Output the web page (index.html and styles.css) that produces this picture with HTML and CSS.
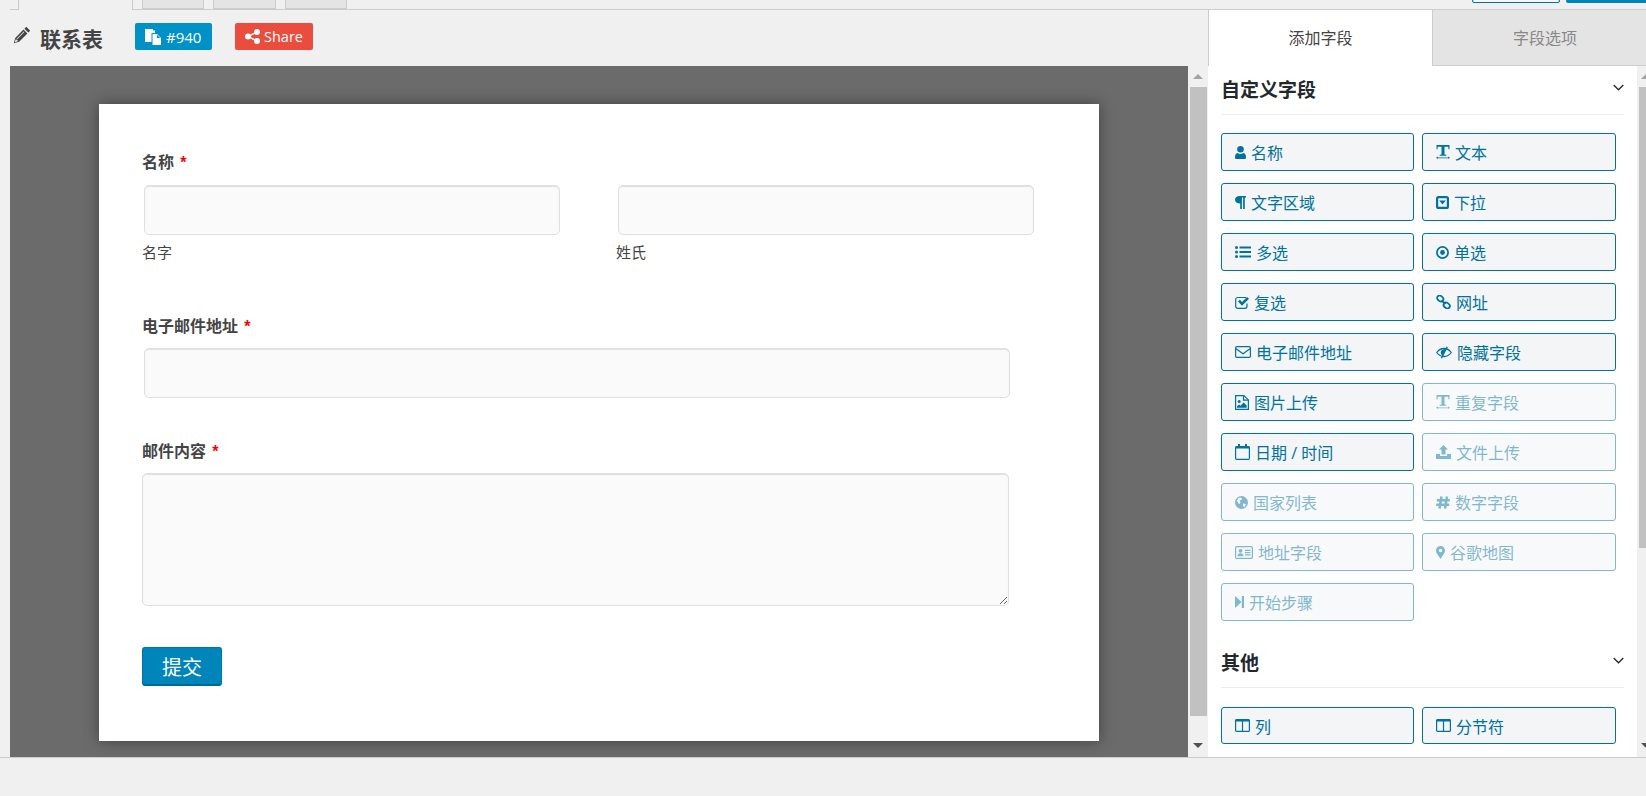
FILE: index.html
```html
<!DOCTYPE html>
<html lang="zh-CN">
<head>
  <meta charset="utf-8"/>
  <title>联系表</title>
  <link rel="stylesheet" href="styles.css">
</head>
<body>
  <div class="top-bar">
    <div class="top-tab top-tab-active"></div>
    <div class="top-tab"></div>
    <div class="top-tab"></div>
    <div class="top-tab"></div>
    <div class="top-actions">
      <div class="top-btn-outline"></div>
      <div class="top-btn-solid"></div>
    </div>
  </div>

  <div class="workspace">
    <div class="editor">
      <div class="editor-head">
        <svg class="title-icon" width="18" height="18" viewBox="0 0 18 18"><path d="M13.300.8l3.900 3.900-1.900 1.900-3.900-3.900zM10.500 3.600l3.900 3.900-8.300 8.300-5.300 1.400 1.400-5.300z M10.800 5.500L3.600 12.700l.6.6 7.200-7.200z M2.700 13.200l-.9 3 3-.9-.5-1.300z" fill-rule="evenodd"/></svg>
        <h1 class="form-title">联系表</h1>
        <span class="badge badge-id">
          <svg width="16" height="16" viewBox="0 0 16 16"><path d="M0 0h8v1.500H10V4H6.500v9H0z"/><path d="M7.500 5H12l4 4v7H7.500z M12 5.800V9h3.200z" fill-rule="evenodd"/></svg>
          #940
        </span>
        <span class="badge badge-share">
          <svg width="15" height="15" viewBox="0 0 15 15"><circle cx="12" cy="3" r="3"/><circle cx="12" cy="12" r="3"/><circle cx="3" cy="7.500" r="3"/><path d="M3 7.500L12 3M3 7.500L12 12" stroke="currentColor" stroke-width="1.500"/></svg>
          Share
        </span>
      </div>
      <div class="canvas">
        <div class="stage">
          <form class="paper">
            <label class="field-label">名称 <span class="req">*</span></label>
            <div class="name-row">
              <div class="name-col">
                <input class="text-input" type="text">
                <div class="sub-label">名字</div>
              </div>
              <div class="name-col">
                <input class="text-input" type="text">
                <div class="sub-label">姓氏</div>
              </div>
            </div>
            <label class="field-label email-label">电子邮件地址 <span class="req">*</span></label>
            <input class="text-input email-input" type="text">
            <label class="field-label message-label">邮件内容 <span class="req">*</span></label>
            <textarea class="text-area"></textarea>
            <button class="submit-btn" type="button">提交</button>
          </form>
        </div>
        <div class="scrollbar">
          <div class="arrow-up"></div>
          <div class="thumb thumb-main"></div>
          <div class="arrow-down"></div>
        </div>
      </div>
    </div>

    <div class="sidebar">
      <div class="side-tabs">
        <div class="side-tab side-tab-active">添加字段</div>
        <div class="side-tab">字段选项</div>
      </div>
      <div class="side-body">
        <div class="side-panel">
          <div class="section-head">
            <h2>自定义字段</h2>
            <svg width="11" height="7" viewBox="0 0 11 7"><path d="M.7 1l4.800 4.800L10.300 1" fill="none" stroke="currentColor" stroke-width="1.300"/></svg>
          </div>
          <div class="field-grid">
            <div class="field-btn">
              <svg width="11" height="13" viewBox="0 0 11 13"><circle cx="5.500" cy="3.300" r="3.300"/><path d="M1.500 13C.5 13 0 12.400 0 11.400 0 9.200.6 6.900 2.700 6.900c.7.600 1.700 1 2.800 1s2.100-.4 2.800-1C10.400 6.900 11 9.200 11 11.400c0 1-.5 1.600-1.500 1.600z"/></svg>
              名称
            </div>
            <div class="field-btn">
              <svg width="14" height="14" viewBox="0 0 14 14"><path d="M.5 0h13v4.200h-1l-.3-2.400H8.500v7.600l1.800.3v1H3.700v-1l1.800-.3V1.800H1.800L1.500 4.200h-1z"/><path d="M0 12.800l1.800-1.400v1h10.400v-1l1.800 1.400-1.800 1.200v-.8H1.800v.8z"/></svg>
              文本
            </div>
            <div class="field-btn">
              <svg width="11" height="13" viewBox="0 0 11 13"><path d="M4.800 0H11v1.600H9.800V13H8.100V1.600H6.900V13H5.200V7.600C2 7.600 0 6 0 3.800S2 0 4.800 0z"/></svg>
              文字区域
            </div>
            <div class="field-btn">
              <svg width="13" height="13" viewBox="0 0 13 13"><rect x="1.100" y="1.100" width="10.800" height="10.800" rx="1.500" fill="none" stroke="currentColor" stroke-width="2.200"/><path d="M3.200 4.600h6.600l-3.300 4z"/></svg>
              下拉
            </div>
            <div class="field-btn">
              <svg width="16" height="12" viewBox="0 0 16 12"><circle cx="1.500" cy="1.500" r="1.500"/><circle cx="1.500" cy="6" r="1.500"/><circle cx="1.500" cy="10.500" r="1.500"/><path d="M4.500.5H16v2H4.500zM4.500 5H16v2H4.500zM4.500 9.500H16v2H4.500z"/></svg>
              多选
            </div>
            <div class="field-btn">
              <svg width="13" height="13" viewBox="0 0 13 13"><circle cx="6.500" cy="6.500" r="5.600" fill="none" stroke="currentColor" stroke-width="1.700"/><circle cx="6.500" cy="6.500" r="2.400"/></svg>
              单选
            </div>
            <div class="field-btn">
              <svg width="14" height="13" viewBox="0 0 14 13"><path d="M12 7.500V10.300c0 1.200-.8 2-2 2H2.700c-1.200 0-2-.8-2-2V3.500c0-1.200.8-2 2-2H11" fill="none" stroke="currentColor" stroke-width="1.200"/><path d="M3 5.600l1.800-1.800 2.200 2.300 5.100-5.200L14 2.800 7 9.800z"/></svg>
              复选
            </div>
            <div class="field-btn">
              <svg width="15" height="14" viewBox="0 0 15 14"><g fill="none" stroke="currentColor" stroke-width="1.800"><rect x="1" y="1" width="6.500" height="5" rx="2.500" transform="rotate(40 4.200 3.500)"/><rect x="7.500" y="8" width="6.500" height="5" rx="2.500" transform="rotate(40 10.700 10.500)"/><path d="M5.500 5.500l4 3.500"/></g></svg>
              网址
            </div>
            <div class="field-btn">
              <svg width="16" height="12" viewBox="0 0 16 12"><rect x=".6" y=".6" width="14.800" height="10.800" rx="1.300" fill="none" stroke="currentColor" stroke-width="1.200"/><path d="M1 2.800l7 5 7-5" fill="none" stroke="currentColor" stroke-width="1.200"/></svg>
              电子邮件地址
            </div>
            <div class="field-btn">
              <svg width="16" height="13" viewBox="0 0 16 13"><path d="M.8 6.500C2.500 4 5 2.500 8 2.500s5.500 1.500 7.200 4c-1.700 2.500-4.200 4-7.200 4s-5.500-1.500-7.200-4z" fill="none" stroke="currentColor" stroke-width="1.300"/><path d="M4.800 6.500c0-1.800 1.400-3.200 3.200-3.200h1.600L6.600 9.400C5.400 8.900 4.800 7.800 4.800 6.500z"/><path d="M5.400 12.300L11.200.7" stroke="currentColor" stroke-width="1.400"/></svg>
              隐藏字段
            </div>
            <div class="field-btn">
              <svg width="14" height="15" viewBox="0 0 14 15"><path d="M.6.6h8.200l4.600 4.300v9.500H.6z" fill="none" stroke="currentColor" stroke-width="1.200"/><path d="M8.500.8v4.400h4.700" fill="none" stroke="currentColor" stroke-width="1.200"/><circle cx="4.200" cy="6.500" r="1.500"/><path d="M2 12.800v-1.600l2-1.700 1.500 1.300 3.200-3.200 3 3v2.200z"/></svg>
              图片上传
            </div>
            <div class="field-btn is-disabled">
              <svg width="14" height="14" viewBox="0 0 14 14"><path d="M.5 0h13v4.200h-1l-.3-2.400H8.500v7.600l1.800.3v1H3.700v-1l1.800-.3V1.800H1.800L1.500 4.200h-1z"/><path d="M0 12.800l1.800-1.400v1h10.400v-1l1.800 1.400-1.800 1.200v-.8H1.800v.8z"/></svg>
              重复字段
            </div>
            <div class="field-btn">
              <svg width="15" height="16" viewBox="0 0 15 16"><rect x=".6" y="2.600" width="13.800" height="12.800" rx="1.200" fill="none" stroke="currentColor" stroke-width="1.200"/><path d="M.6 2.500h13.800v2H.6zM3 0h2v4H3zM10 0h2v4h-2z"/></svg>
              日期 / 时间
            </div>
            <div class="field-btn is-disabled">
              <svg width="15" height="14" viewBox="0 0 15 14"><path d="M7.500 0l4.500 4.500H9.500V9.500h-4V4.500H3z"/><path d="M0 9h4v2h7V9h4v5H0z"/></svg>
              文件上传
            </div>
            <div class="field-btn is-disabled">
              <svg width="13" height="13" viewBox="0 0 13 13"><circle cx="6.500" cy="6.500" r="6.500"/><path d="M3 2.500l2.500-1 1.500 1-.5 1.500-2 .5 1 2.500L4 8 2 5zM8 7.500l3 .5-1.500 3L8 10z" fill="#fff"/></svg>
              国家列表
            </div>
            <div class="field-btn is-disabled">
              <svg width="14" height="13" viewBox="0 0 14 13"><path d="M5.500.5L3.500 12.500M11 .5L9 12.500M.8 4.200h13M.2 8.800h13" fill="none" stroke="currentColor" stroke-width="2.500"/></svg>
              数字字段
            </div>
            <div class="field-btn is-disabled">
              <svg width="18" height="13" viewBox="0 0 18 13"><rect x=".6" y=".6" width="16.800" height="11.800" rx="1.200" fill="none" stroke="currentColor" stroke-width="1.200"/><circle cx="5.500" cy="4.800" r="1.900"/><path d="M2.500 10.200c0-2 1-3 3-3s3 1 3 3zM10 3.800h5.500v1.200H10zM10 6h5.500v1.200H10zM10 8.200h5.500v1.200H10z"/></svg>
              地址字段
            </div>
            <div class="field-btn is-disabled">
              <svg width="9" height="13" viewBox="0 0 9 13"><path d="M4.500 0C2 0 0 2 0 4.500c0 1 .3 1.700.7 2.400L4.500 13l3.800-6.100c.4-.7.7-1.400.7-2.400C9 2 7 0 4.500 0zm0 6.300a1.800 1.800 0 1 1 0-3.600 1.800 1.800 0 0 1 0 3.600z" fill-rule="evenodd"/></svg>
              谷歌地图
            </div>
            <div class="field-btn is-disabled">
              <svg width="9" height="12" viewBox="0 0 9 12"><path d="M0 0l6.500 6L0 12zM6.800 0H9v12H6.800z"/></svg>
              开始步骤
            </div>
          </div>

          <div class="section-head section-head-next">
            <h2>其他</h2>
            <svg width="11" height="7" viewBox="0 0 11 7"><path d="M.7 1l4.800 4.800L10.300 1" fill="none" stroke="currentColor" stroke-width="1.300"/></svg>
          </div>
          <div class="field-grid field-grid-short">
            <div class="field-btn">
              <svg width="15" height="13" viewBox="0 0 15 13"><rect x=".6" y=".6" width="13.800" height="11.800" rx="1" fill="none" stroke="currentColor" stroke-width="1.200"/><path d="M.6.6h13.800v2H.6zM6.900 2h1.200v10H6.900z"/></svg>
              列
            </div>
            <div class="field-btn">
              <svg width="15" height="13" viewBox="0 0 15 13"><rect x=".6" y=".6" width="13.800" height="11.800" rx="1" fill="none" stroke="currentColor" stroke-width="1.200"/><path d="M.6.6h13.800v2H.6zM6.900 2h1.200v10H6.900z"/></svg>
              分节符
            </div>
          </div>
        </div>
        <div class="scrollbar scrollbar-cut">
          <div class="arrow-up"></div>
          <div class="thumb thumb-side"></div>
          <div class="arrow-down"></div>
        </div>
      </div>
    </div>
  </div>
</body>
</html>
```

FILE: styles.css
```css
html, body {
  margin: 0;
  height: 796px;
  overflow: hidden;
  background: #f0f0f0;
}

body {
  font-family: "Open Sans", "Noto Sans CJK SC", sans-serif;
  color: #444;
}

svg {
  flex: none;
  fill: currentColor;
}

/* strip of cut off tabs at the very top */
.top-bar {
  display: flex;
  box-sizing: border-box;
  height: 10px;
  margin-left: 10px;
  border-bottom: 1px solid #ccc;
}

.top-tab {
  box-sizing: border-box;
  width: 62.3px;
  height: 9px;
  margin-right: 9px;
  background: #e4e4e4;
  border: 1px solid #ccc;
  border-top: none;
}

.top-tab-active {
  width: 115px;
  height: 10px;
  margin-left: 8px;
  background: #f0f0f0;
  border-bottom: none;
}

.top-actions {
  display: flex;
  gap: 6px;
  margin-left: auto;
  margin-top: -1px;
}

.top-btn-outline {
  box-sizing: border-box;
  width: 88px;
  height: 4px;
  background: #f7f7f7;
  border: 1px solid #0073aa;
  border-radius: 3px;
}

.top-btn-solid {
  width: 80px;
  height: 4px;
  background: #0085ba;
  border-radius: 3px 0 0 3px;
}

.workspace {
  display: flex;
  box-sizing: border-box;
  height: 748px;
  border-bottom: 1px solid #ccc;
}

.editor {
  width: 1208px;
  display: flex;
  flex-flow: column;
}

.editor-head {
  display: flex;
  align-items: center;
  height: 56px;
  padding-left: 13px;
  flex: none;
}

.title-icon {
  color: #444;
  margin-bottom: 6px;
}

.form-title {
  margin: 0 0 0 9px;
  width: 95px;
  font-size: 21px;
  line-height: 28px;
  padding-top: 1px;
  font-weight: 700;
  color: #444;
}

.badge {
  display: flex;
  align-items: center;
  gap: 5px;
  box-sizing: border-box;
  height: 27px;
  margin-bottom: 3px;
  padding-left: 10px;
  border-radius: 2px;
  color: #fff;
  font-size: 15px;
}

.badge-id {
  width: 77px;
  background: #0091c7;
}

.badge-share {
  width: 78px;
  margin-left: 23px;
  background: #ea4c3d;
  gap: 4px;
  font-size: 14.5px;
}

.canvas {
  flex: 1;
  display: flex;
  margin-left: 10px;
  min-height: 0;
}

.stage {
  flex: 1;
  padding: 38px 0 0 89px;
  background: #6b6b6b;
  overflow: hidden;
}

.paper {
  display: block;
  box-sizing: border-box;
  width: 1000px;
  height: 637px;
  padding: 46px 0 0 43px;
  background: #fff;
  box-shadow: 0 0 14px rgba(0, 0, 0, .4);
}

.field-label {
  display: block;
  height: 24px;
  font-size: 16px;
  line-height: 24px;
  font-weight: 700;
  color: #444;
}

.req {
  margin-left: 2px;
  color: #f00;
  font-family: "Liberation Sans", sans-serif;
}

.name-row {
  display: flex;
  margin-top: 11px;
}

.name-col {
  width: 474px;
}

.text-input {
  display: block;
  box-sizing: border-box;
  width: 416px;
  height: 50px;
  margin: 0 0 0 2px;
  background: #fafafa;
  border: 1px solid #e0e0e0;
  border-radius: 5px;
  box-shadow: inset 0 1px 1px rgba(0, 0, 0, .1);
  outline: none;
}

.sub-label {
  height: 20px;
  margin-top: 7px;
  font-size: 15px;
  line-height: 20px;
  color: #444;
}

.email-label {
  margin-top: 52px;
}

.email-input {
  width: 866px;
  margin-top: 10px;
}

.message-label {
  margin-top: 41px;
}

.text-area {
  display: block;
  box-sizing: border-box;
  width: 867px;
  height: 133px;
  margin: 10px 0 0;
  background: #fafafa;
  border: 1px solid #e0e0e0;
  border-radius: 5px;
  box-shadow: inset 0 1px 1px rgba(0, 0, 0, .1);
  outline: none;
}

.submit-btn {
  display: block;
  box-sizing: border-box;
  width: 80px;
  height: 39px;
  margin-top: 41px;
  padding: 0;
  background: #0085ba;
  border: 1px solid #0073aa;
  border-bottom: 2px solid #006799;
  border-radius: 3px;
  color: #fff;
  font-family: inherit;
  font-size: 20px;
}

/* scrollbars are painted by hand so they sit at the same spot every time */
.scrollbar {
  position: relative;
  flex: none;
  width: 20px;
  background: #f0f0f0;
}

.scrollbar-cut {
  width: 9px;
}

.arrow-up, .arrow-down {
  position: absolute;
  left: 5px;
  width: 0;
  height: 0;
  border-left: 5px solid transparent;
  border-right: 5px solid transparent;
}

.arrow-up {
  top: 8px;
  border-bottom: 5px solid #a3a3a3;
}

.arrow-down {
  bottom: 9px;
  border-top: 5px solid #505050;
}

.scrollbar-cut .arrow-up, .scrollbar-cut .arrow-down {
  left: 4px;
}

.thumb {
  position: absolute;
  background: #c1c1c1;
}

.thumb-main {
  left: 2px;
  width: 17px;
  top: 21px;
  height: 629px;
}

.thumb-side {
  left: 2px;
  width: 7px;
  top: 21px;
  height: 461px;
}

.sidebar {
  flex: 1;
  display: flex;
  flex-flow: column;
  min-width: 0;
}

.side-tabs {
  display: flex;
  flex: none;
  height: 56px;
  font-size: 16px;
  text-align: center;
  line-height: 56px;
}

.side-tab {
  flex: 1;
  box-sizing: border-box;
  padding-left: 11px;
  background: #e4e4e4;
  color: #888;
  border-left: 1px solid #ccc;
  border-bottom: 1px solid #ccc;
}

.side-tab-active {
  flex: none;
  width: 224px;
  padding-left: 0;
  background: #fff;
  color: #444;
  border-bottom: none;
}

.side-body {
  flex: 1;
  display: flex;
  min-height: 0;
}

.side-panel {
  flex: none;
  box-sizing: border-box;
  width: 429px;
  padding-left: 13px;
  background: #fff;
  overflow: hidden;
}

.section-head {
  display: flex;
  align-items: flex-start;
  justify-content: space-between;
  box-sizing: border-box;
  width: 403px;
  height: 49px;
  padding-top: 11px;
  border-bottom: 1px solid #eee;
  color: #23282d;
}

.section-head h2 {
  margin: 0;
  font-size: 19px;
  line-height: 26px;
  font-weight: 700;
}

.section-head svg {
  margin-top: 7px;
}

.section-head-next {
  margin-top: 18px;
}

.field-grid {
  display: grid;
  grid-template-columns: 193px 194px;
  grid-auto-rows: 38px;
  gap: 12px 8px;
  margin-top: 18px;
}

.field-grid-short {
  grid-auto-rows: 37px;
  margin-top: 19px;
}

.field-btn {
  display: flex;
  align-items: center;
  gap: 5px;
  box-sizing: border-box;
  padding-left: 13px;
  background: #f3f5f6;
  border: 1px solid #0071a1;
  border-radius: 3px;
  color: #0071a1;
  font-size: 16px;
}

.is-disabled {
  opacity: .5;
}
```
